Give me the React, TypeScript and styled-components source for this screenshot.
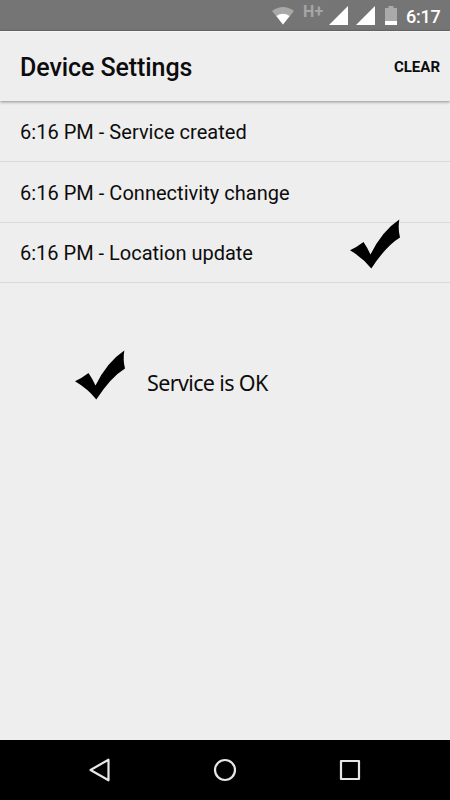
import React from "react";
import styled, { createGlobalStyle } from "styled-components";

const GlobalStyle = createGlobalStyle`
  * { box-sizing: border-box; }
  body { margin: 0; background: #eeeeee; }
`;

const Screen = styled.div`
  width: 450px;
  height: 800px;
  display: flex;
  flex-direction: column;
  background: #eeeeee;
  color: #0c0c0c;
  font-family: Roboto, sans-serif;
  overflow: hidden;
`;

const StatusBar = styled.header`
  height: 31px;
  flex: none;
  display: flex;
  justify-content: flex-end;
  background: #757575;
  border-bottom: 1px solid #6c6c6c;
  padding-right: 10px;
`;

const StatusIcon = styled.svg<{ $gap: number }>`
  flex: none;
  height: 30px;
  margin-right: ${(p) => p.$gap}px;
`;

const Network = styled.span`
  width: 21px;
  margin-right: 5px;
  font-size: 16px;
  font-weight: 700;
  line-height: 24px;
  letter-spacing: 0.3px;
  color: #a5a5a5;
  white-space: nowrap;
`;

const Clock = styled.time`
  width: 34px;
  font-size: 18px;
  font-weight: 500;
  line-height: 33px;
  letter-spacing: -0.2px;
  color: #fff;
  white-space: nowrap;
`;

const AppBar = styled.div`
  height: 70px;
  flex: none;
  display: flex;
  align-items: center;
  justify-content: space-between;
  padding: 2px 10px 0 20px;
  border-top: 1px solid #f5f5f5;
  box-shadow: 0 1px 3px rgba(0, 0, 0, 0.4);
  z-index: 1;
`;

const Title = styled.h1`
  margin: 0;
  font-size: 25px;
  font-weight: 500;
  line-height: 30px;
  letter-spacing: -0.08px;
  white-space: nowrap;
`;

const ClearButton = styled.button`
  border: 0;
  padding: 0 0 2px;
  background: none;
  color: #0c0c0c;
  font: 700 15px/20px Roboto, sans-serif;
  white-space: nowrap;
`;

const EventList = styled.ul`
  margin: 0;
  padding: 0;
  list-style: none;
`;

const EventRow = styled.li`
  height: 61px;
  display: flex;
  align-items: center;
  justify-content: space-between;
  padding: 2px 50px 0 20px;
  border-bottom: 1px solid #d9d9d9;
  font-size: 20px;
  line-height: 24px;
  letter-spacing: 0.03px;
  white-space: nowrap;

  &:last-child {
    height: 60px;
    padding-top: 0;
    letter-spacing: 0;
  }
`;

const Check = styled.svg<{ $shift: number }>`
  width: 50px;
  height: 50px;
  flex: none;
  margin-top: ${(p) => p.$shift}px;
`;

const Summary = styled.section`
  display: flex;
  align-items: flex-start;
  padding: 67px 0 0 75px;
  flex: 1;
`;

const SummaryText = styled.p`
  margin: 18px 0 0 22px;
  font: 21.5px/30px "Noto Sans", sans-serif;
  letter-spacing: -0.63px;
  white-space: nowrap;
`;

const NavBar = styled.nav`
  height: 60px;
  flex: none;
  display: grid;
  grid-template-columns: repeat(3, 125px);
  justify-content: center;
  align-items: center;
  justify-items: center;
  background: #000;
`;

const NavIcon = styled.svg`
  width: 26px;
  height: 26px;
  fill: none;
  stroke: #e6e6e6;
  stroke-width: 2.2;
  stroke-linejoin: round;
`;

const CheckMark = ({ shift = 0 }: { shift?: number }) => (
  <Check $shift={shift} viewBox="0 0 50 50">
    <path d="M0 31.3 Q7 28 13.5 23 Q17 28 20.5 35.5 Q32 12 49.3 .5 Q47.8 10 50 18.5 Q36 27 21.3 49.5 Q13 39 0 31.3Z" fill="#000" />
  </Check>
);

const events = [
  { text: "6:16 PM - Service created" },
  { text: "6:16 PM - Connectivity change" },
  { text: "6:16 PM - Location update", checked: true },
];

export default function App() {
  return (
    <>
      <GlobalStyle />
      <Screen>
        <StatusBar>
          <StatusIcon $gap={9} width="22" viewBox="0 0 22 30">
            <path d="M0 11 Q11 3 22 11 L11 24.5Z" fill="#a8a8a8" />
            <path d="M4.4 16 Q11 11.5 17.6 16 L11 24.5Z" fill="#fff" />
          </StatusIcon>
          <Network>H+</Network>
          <StatusIcon $gap={8} width="19" viewBox="0 0 19 30">
            <path d="M0 25 L19 6 V25Z" fill="#fff" />
          </StatusIcon>
          <StatusIcon $gap={10} width="19" viewBox="0 0 19 30">
            <path d="M0 25 L19 6 V25Z" fill="#fff" />
          </StatusIcon>
          <StatusIcon $gap={9} width="12" viewBox="0 0 12 30">
            <path d="M0 8 H3.5 V6 H8.5 V8 H12 V21 H0Z" fill="#aaa" />
            <path d="M0 21 H12 V25 H0Z" fill="#fff" />
          </StatusIcon>
          <Clock>6:17</Clock>
        </StatusBar>
        <AppBar>
          <Title>Device Settings</Title>
          <ClearButton>CLEAR</ClearButton>
        </AppBar>
        <EventList>
          {events.map((event) => (
            <EventRow key={event.text}>
              <span>{event.text}</span>
              {event.checked && <CheckMark shift={-18} />}
            </EventRow>
          ))}
        </EventList>
        <Summary>
          <CheckMark />
          <SummaryText>Service is OK</SummaryText>
        </Summary>
        <NavBar>
          <NavIcon viewBox="0 0 26 26">
            <path d="M3.5 13 L21.5 2.7 V23.3Z" />
          </NavIcon>
          <NavIcon viewBox="0 0 26 26">
            <circle cx="13" cy="13" r="10" />
          </NavIcon>
          <NavIcon viewBox="0 0 26 26">
            <rect x="4" y="4" width="18" height="18" />
          </NavIcon>
        </NavBar>
      </Screen>
    </>
  );
}
